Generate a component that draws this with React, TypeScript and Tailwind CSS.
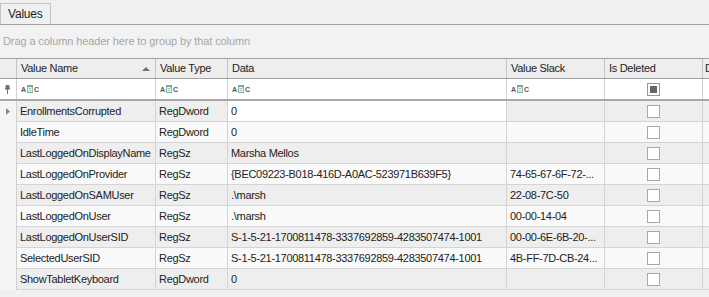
import React from "react";

const font = { fontFamily: '"Liberation Sans", Arial, sans-serif' };

const rows: [string, string, string, string][] = [
  ["EnrollmentsCorrupted", "RegDword", "0", ""],
  ["IdleTime", "RegDword", "0", ""],
  ["LastLoggedOnDisplayName", "RegSz", "Marsha Mellos", ""],
  ["LastLoggedOnProvider", "RegSz", "{BEC09223-B018-416D-A0AC-523971B639F5}", "74-65-67-6F-72-..."],
  ["LastLoggedOnSAMUser", "RegSz", ".\\marsh", "22-08-7C-50"],
  ["LastLoggedOnUser", "RegSz", ".\\marsh", "00-00-14-04"],
  ["LastLoggedOnUserSID", "RegSz", "S-1-5-21-1700811478-3337692859-4283507474-1001", "00-00-6E-6B-20-..."],
  ["SelectedUserSID", "RegSz", "S-1-5-21-1700811478-3337692859-4283507474-1001", "4B-FF-7D-CB-24..."],
  ["ShowTabletKeyboard", "RegDword", "0", ""],
];

function Abc() {
  return (
    <span className="flex items-center gap-[1px] text-[7px] leading-none font-bold text-[#555] tracking-normal">
      <span>A</span>
      <span className="bg-[#7aab95] text-[#ffffff] w-[6px] h-[8px] flex items-center justify-center">B</span>
      <span>C</span>
    </span>
  );
}

function Checkbox() {
  return <div className="w-[13px] h-[13px] border border-[#a8a8a8] bg-white" />;
}

const grid = "grid grid-cols-[17px_139px_72px_279px_98px_98px_1fr]";

export default function App() {
  return (
    <div className="w-[709px] h-[297px] bg-[#f0f0f0] overflow-hidden text-[11px] tracking-[-0.3px] text-[#222]" style={font}>
      {/* Tabs */}
      <div className="h-[25px] pt-[3px] border-b border-[#a0a0a0] flex">
        <div className="w-[51px] h-[21px] border border-b-0 border-[#c4c4c4] bg-[#f0f0f0] flex items-center pl-[7px] text-[12px] tracking-[-0.2px]">
          Values
        </div>
      </div>
      {/* Group panel */}
      <div className="h-[33px] bg-[#f2f2f2] flex items-center pl-[3px] text-[11px] tracking-[-0.1px] text-[#a6a6a6]">
        Drag a column header here to group by that column
      </div>
      {/* Grid */}
      <div className="bg-white">
        {/* Header */}
        <div className={`${grid} h-[21px] border-t border-b border-[#a0a0a0] bg-[#eeeeee]`}>
          <div className="border-r border-[#c4c4c4]" />
          <div className="border-r border-[#c4c4c4] flex items-center pl-[4px] pr-[5px] justify-between">
            <span>Value Name</span>
            <svg width="8" height="4" viewBox="0 0 8 4"><path d="M4 0 L8 4 L0 4 Z" fill="#707070" /></svg>
          </div>
          <div className="border-r border-[#c4c4c4] flex items-center pl-[4px]">Value Type</div>
          <div className="border-r border-[#c4c4c4] flex items-center pl-[4px]">Data</div>
          <div className="border-r border-[#c4c4c4] flex items-center pl-[4px]">Value Slack</div>
          <div className="border-r border-[#c4c4c4] flex items-center pl-[4px]">Is Deleted</div>
          <div className="flex items-center pl-[2px] overflow-hidden whitespace-nowrap">D</div>
        </div>
        {/* Filter row */}
        <div className={`${grid} h-[22px] border-b-2 border-[#a8a8a8] bg-white`}>
          <div className="border-r border-[#d0d0d0] flex items-center justify-center pr-[2px]">
            <svg width="5" height="9" viewBox="0 0 5 9">
              <rect x="0.5" y="0" width="4" height="4" rx="1" fill="#707070" />
              <rect x="0" y="3" width="5" height="1.5" fill="#707070" />
              <rect x="2" y="4" width="1" height="5" fill="#707070" />
            </svg>
          </div>
          <div className="border-r border-[#d0d0d0] flex items-center pl-[4px]"><Abc /></div>
          <div className="border-r border-[#d0d0d0] flex items-center pl-[4px]"><Abc /></div>
          <div className="border-r border-[#d0d0d0] flex items-center pl-[4px]"><Abc /></div>
          <div className="border-r border-[#d0d0d0] flex items-center pl-[4px]"><Abc /></div>
          <div className="border-r border-[#d0d0d0] flex items-center justify-center">
            <div className="w-[13px] h-[13px] border border-[#999] bg-white p-[2px]">
              <div className="w-[7px] h-[7px] bg-[#666]" />
            </div>
          </div>
          <div />
        </div>
        {/* Data rows */}
        {rows.map((r, i) => {
          const bg = i % 2 === 0 ? "bg-[#eeeeee]" : "bg-[#f9f9f9]";
          const cell = `h-[21px] border-r border-b border-[#d4d4d4] flex items-center pl-[3px] whitespace-nowrap overflow-hidden ${bg}`;
          return (
            <div key={i} className={grid}>
              <div className="h-[21px] border-r border-[#d0d0d0] bg-[#f5f5f5] flex items-center pl-[6px]">
                {i === 0 && (
                  <svg width="4" height="7" viewBox="0 0 4 7"><path d="M0 0 L4 3.5 L0 7 Z" fill="#8a8a8a" /></svg>
                )}
              </div>
              <div className={cell}>{r[0]}</div>
              <div className={cell}>{r[1]}</div>
              <div className={`${cell} ${i === 0 ? "!bg-white" : ""}`}>{r[2]}</div>
              <div className={cell}>{r[3]}</div>
              <div className={`${cell} justify-center !pl-0`}><Checkbox /></div>
              <div className={`h-[21px] border-b border-[#d4d4d4] ${bg}`} />
            </div>
          );
        })}
      </div>
    </div>
  );
}
